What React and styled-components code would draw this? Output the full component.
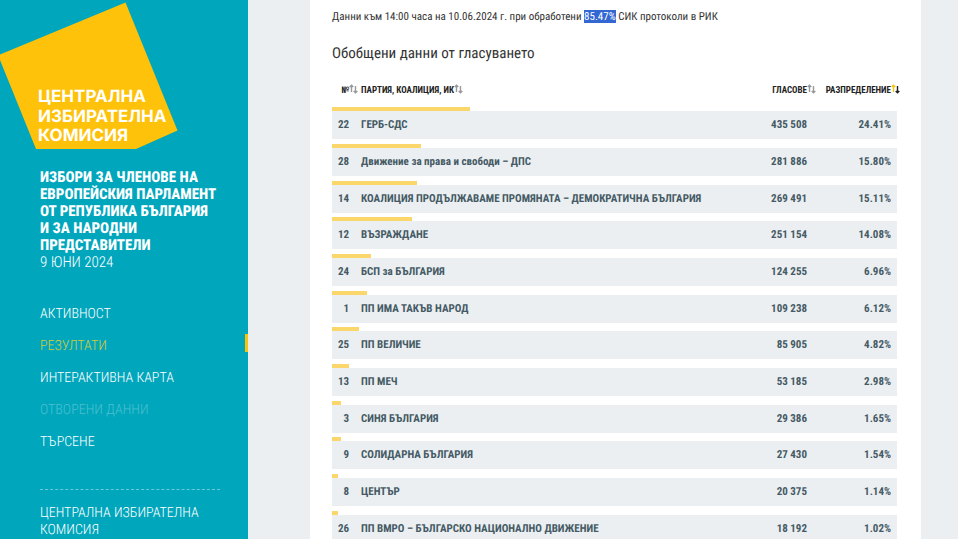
import React, {useState} from "react";
import styled, {createGlobalStyle} from "styled-components";

const GlobalStyles = createGlobalStyle`
    * {
        box-sizing: border-box;
    }

    body {
        margin: 0;
        background: #ebeff2;
        color: #333333;
        font-family: "Roboto Condensed", "Roboto", "Liberation Sans Narrow", sans-serif;
        font-size: 11px;
        text-rendering: geometricPrecision;
    }
`

const Page = styled.div`
    display: flex;
    min-height: 100vh;
`

const Sidebar = styled.aside`
    flex: 0 0 248px;
    padding: 0 28px 0 0;
    background: #00a6bc;
    color: #ffffff;
`

const LogoLink = styled.a`
    display: block;
    height: 169px;
`

const SidebarBody = styled.div`
    padding-left: 40px;
`

const SiteTitle = styled.h1`
    margin: 0;
    font-size: 15px;
    line-height: 17px;
    font-weight: 800;
    text-transform: uppercase;
`

const ElectionDate = styled.div`
    font-size: 15px;
    line-height: 17px;
    font-weight: 300;
`

const Menu = styled.nav`
    display: flex;
    flex-direction: column;
    gap: 14px;
    margin-top: 34px;
    padding-bottom: 38px;
    border-bottom: 1px dashed #66cad7;
`

const MenuLink = styled.a`
    position: relative;
    font-size: 14px;
    line-height: 18px;
    font-weight: 300;
    text-decoration: none;
    color: ${props => props.$active ? '#d2cb3a' : props.$muted ? '#4cc0cf' : '#ffffff'};

    ${props => props.$active && `
        &::after {
            content: "";
            position: absolute;
            top: -3px;
            right: -28px;
            width: 3px;
            height: 18px;
            background: #fcc30b;
        }
    `}
`

const FooterLink = styled(MenuLink)`
    display: block;
    margin-top: 15px;
    line-height: 17px;
`

const Main = styled.main`
    flex: 1;
    min-width: 0;
    padding: 0 37px 0 62px;
`

const Panel = styled.section`
    min-height: 100%;
    padding: 9px 24px 0 22px;
    background: #ffffff;
`

const Status = styled.p`
    margin: 0;
    line-height: 16px;

    mark {
        background: #3367d1;
        color: #ffffff;
    }
`

const Heading = styled.h2`
    margin: 18px 0 14px;
    font-size: 15px;
    line-height: 20px;
    font-weight: 400;
`

const ResultsTable = styled.table`
    width: 100%;
    table-layout: fixed;
    border-collapse: collapse;
    font-weight: 700;
`

const HeadCell = styled.th`
    width: ${props => props.$width};
    height: 26px;
    padding: 0 ${props => props.$padRight || '0px'} 0 0;
    text-align: ${props => props.$align || 'left'};
`

const SortButton = styled.button`
    position: relative;
    padding: 0;
    border: 0;
    background: none;
    color: #222222;
    font: inherit;
    font-size: 9px;
    line-height: 16px;
    font-weight: 700;
    white-space: nowrap;
    cursor: pointer;

    svg {
        position: absolute;
        left: 100%;
        top: 2px;
    }
`

const BarRow = styled.tr`
    td {
        padding: 5px 0 0;
    }

    &:nth-child(6n + 1) td {
        padding-top: 4px;
    }
`

const Bar = styled.div`
    height: 4px;
    background: #fad66b;
`

const ResultRow = styled.tr`
    background: #ebeff2;
    color: #455a64;
`

const Cell = styled.td`
    height: 28px;
    padding: 0 ${props => props.$padRight || '0px'} 0 0;
    font-size: 11px;
    line-height: 16px;
    text-align: ${props => props.$align || 'left'};
    white-space: nowrap;
`

const columns = [
    {key: 'number', label: '№', align: 'right', width: '29px', padRight: '12px'},
    {key: 'name', label: 'ПАРТИЯ, КОАЛИЦИЯ, ИК'},
    {key: 'votes', label: 'ГЛАСОВЕ', align: 'right', width: '80px'},
    {key: 'share', label: 'РАЗПРЕДЕЛЕНИЕ', align: 'right', width: '90px', padRight: '6px'},
];

const parties = [
    {number: 22, name: 'ГЕРБ-СДС', votes: 435508, share: 24.41},
    {number: 28, name: 'Движение за права и свободи – ДПС', votes: 281886, share: 15.80},
    {number: 14, name: 'КОАЛИЦИЯ ПРОДЪЛЖАВАМЕ ПРОМЯНАТА – ДЕМОКРАТИЧНА БЪЛГАРИЯ', votes: 269491, share: 15.11},
    {number: 12, name: 'ВЪЗРАЖДАНЕ', votes: 251154, share: 14.08},
    {number: 24, name: 'БСП за БЪЛГАРИЯ', votes: 124255, share: 6.96},
    {number: 1, name: 'ПП ИМА ТАКЪВ НАРОД', votes: 109238, share: 6.12},
    {number: 25, name: 'ПП ВЕЛИЧИЕ', votes: 85905, share: 4.82},
    {number: 13, name: 'ПП МЕЧ', votes: 53185, share: 2.98},
    {number: 3, name: 'СИНЯ БЪЛГАРИЯ', votes: 29386, share: 1.65},
    {number: 9, name: 'СОЛИДАРНА БЪЛГАРИЯ', votes: 27430, share: 1.54},
    {number: 8, name: 'ЦЕНТЪР', votes: 20375, share: 1.14},
    {number: 26, name: 'ПП ВМРО – БЪЛГАРСКО НАЦИОНАЛНО ДВИЖЕНИЕ', votes: 18192, share: 1.02},
];

const formatVotes = (votes) => String(votes).replace(/\B(?=(\d{3})+$)/g, ' ');

const Logo = () => (
    <svg width="180" height="150" viewBox="0 0 180 150">
        <path d="M0 54.5 125.5 2.5 177.5 130.5 136 149H36L0 60Z" fill="#fec20a" />
        <g fill="#ffffff" fontFamily="Inter, sans-serif" fontSize="17" fontWeight="700">
            <text x="38" y="102">ЦЕНТРАЛНА</text>
            <text x="38" y="122">ИЗБИРАТЕЛНА</text>
            <text x="38" y="141">КОМИСИЯ</text>
        </g>
    </svg>
);

const SortArrows = ({active}) => (
    <svg width="9" height="10" viewBox="0 0 9 10" fill="none" strokeWidth="1.4">
        <path d="M2.5 8V1M.7 3.1 2.5 1.2l1.8 1.9" stroke={active ? '#fcc30b' : '#999999'} />
        <path d="M6.5 2v7M4.7 6.9 6.5 8.8l1.8-1.9" stroke={active ? '#222222' : '#999999'} />
    </svg>
);

const App = () => {
    const [sort, setSort] = useState({key: 'share', desc: true});

    const changeSort = (key) => {
        setSort({key, desc: sort.key == key ? !sort.desc : true});
    }

    const rows = [...parties].sort((a, b) => {
        const order = sort.key == 'name' ? a.name.localeCompare(b.name, 'bg') : a[sort.key] - b[sort.key];

        return sort.desc ? -order : order;
    });

    return (
        <Page lang="bg">
            <GlobalStyles />
            <Sidebar>
                <LogoLink href="#">
                    <Logo />
                </LogoLink>
                <SidebarBody>
                    <SiteTitle>Избори за членове на Европейския парламент от Република България и за народни представители</SiteTitle>
                    <ElectionDate>9 ЮНИ 2024</ElectionDate>
                    <Menu>
                        <MenuLink href="#activity">АКТИВНОСТ</MenuLink>
                        <MenuLink href="#results" $active>РЕЗУЛТАТИ</MenuLink>
                        <MenuLink href="#map">ИНТЕРАКТИВНА КАРТА</MenuLink>
                        <MenuLink href="#data" $muted>ОТВОРЕНИ ДАННИ</MenuLink>
                        <MenuLink href="#search">ТЪРСЕНЕ</MenuLink>
                    </Menu>
                    <FooterLink href="#cik">ЦЕНТРАЛНА ИЗБИРАТЕЛНА КОМИСИЯ</FooterLink>
                </SidebarBody>
            </Sidebar>
            <Main>
                <Panel>
                    <Status>Данни към 14:00 часа на 10.06.2024 г. при обработени <mark>85.47%</mark> СИК протоколи в РИК</Status>
                    <Heading>Обобщени данни от гласуването</Heading>
                    <ResultsTable>
                        <thead>
                            <tr>
                                {columns.map(column => (
                                    <HeadCell key={column.key} scope="col" $width={column.width} $align={column.align} $padRight={column.padRight}>
                                        <SortButton type="button" onClick={() => changeSort(column.key)}>
                                            {column.label}
                                            <SortArrows active={sort.key == column.key} />
                                        </SortButton>
                                    </HeadCell>
                                ))}
                            </tr>
                        </thead>
                        <tbody>
                            {rows.map(party => (
                                <React.Fragment key={party.number}>
                                    <BarRow>
                                        <td colSpan={4}><Bar style={{width: `${party.share}%`}} /></td>
                                    </BarRow>
                                    <ResultRow>
                                        <Cell $align="right" $padRight="12px">{party.number}</Cell>
                                        <Cell>{party.name}</Cell>
                                        <Cell $align="right">{formatVotes(party.votes)}</Cell>
                                        <Cell $align="right" $padRight="6px">{party.share.toFixed(2)}%</Cell>
                                    </ResultRow>
                                </React.Fragment>
                            ))}
                        </tbody>
                    </ResultsTable>
                </Panel>
            </Main>
        </Page>
    );
}

export default App;
